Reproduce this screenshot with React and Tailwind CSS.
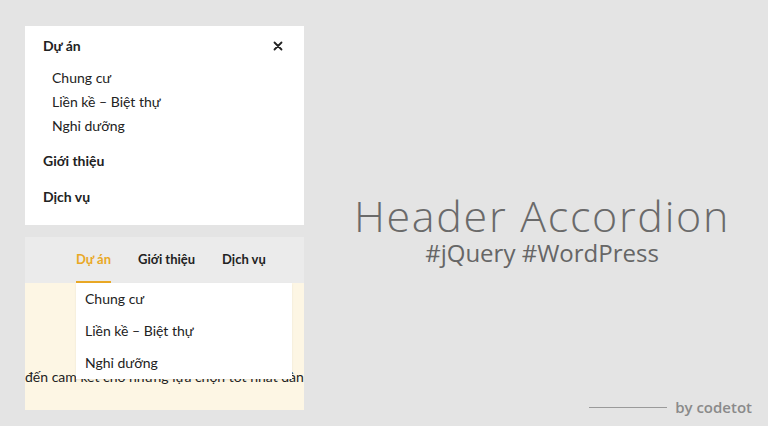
import React from 'react';

const SUB_ITEMS = ['Chung cư', 'Liền kề – Biệt thự', 'Nghỉ dưỡng'];
const NAV_ITEMS = ['Dự án', 'Giới thiệu', 'Dịch vụ'];

const MobileAccordion = () => (
  <div className="bg-white w-[279px] h-[199px] pt-[10px] pl-[18px] pr-[20px] text-[#222]">
    <div className="flex items-center justify-between h-[20px]">
      <span className="text-[14px] font-bold leading-[20px]">Dự án</span>
      <svg width="10" height="10" viewBox="0 0 10 10" className="mr-[1px]">
        <path d="M1.5 1.5 L8.5 8.5 M8.5 1.5 L1.5 8.5" stroke="#222" strokeWidth="1.8" strokeLinecap="round" />
      </svg>
    </div>
    <ul className="mt-[10px] pl-[9px]">
      {SUB_ITEMS.map((item) => (
        <li key={item} className="h-[24px] leading-[24px] text-[14px]">{item}</li>
      ))}
    </ul>
    <div className="mt-[13px] h-[20px] leading-[20px] text-[14px] font-bold">Giới thiệu</div>
    <div className="mt-[16px] h-[20px] leading-[20px] text-[14px] font-bold">Dịch vụ</div>
  </div>
);

const DesktopHeader = () => (
  <div className="mt-[12px] w-[279px] h-[173px] overflow-hidden flex flex-col text-[#222]">
    <nav className="h-[46px] bg-[#ebebeb] flex items-stretch pl-[51px] gap-[27px] shrink-0">
      {NAV_ITEMS.map((item, i) => (
        <div
          key={item}
          className={`flex items-center text-[13px] font-bold border-b-2 pt-[2px] ${
            i === 0 ? 'text-[#e9a825] border-[#e9a825]' : 'border-transparent'
          }`}
        >
          {item}
        </div>
      ))}
    </nav>
    <div className="relative flex-1 bg-[#fdf6e4]">
      {/* page copy peeking out under the open dropdown */}
      <p className="pt-[85px] text-[14px] leading-[18px] whitespace-nowrap">
        đến cam kết cho những lựa chọn tốt nhất dành cho bạn
      </p>
      <ul className="absolute left-[51px] top-0 w-[216px] bg-white shadow-[0_1px_2px_rgba(0,0,0,0.08)]">
        {SUB_ITEMS.map((item) => (
          <li key={item} className="h-[32px] leading-[32px] pl-[9px] text-[14px]">{item}</li>
        ))}
      </ul>
    </div>
  </div>
);

export default function App() {
  return (
    <div
      className="w-[768px] h-[426px] bg-[#e4e4e4] flex overflow-hidden"
      style={{ fontFamily: 'Lato, "Noto Sans", sans-serif' }}
    >
      <div className="pl-[25px] pt-[26px]">
        <MobileAccordion />
        <DesktopHeader />
      </div>
      <div className="flex-1 flex flex-col" style={{ fontFamily: '"Open Sans", sans-serif' }}>
        <div className="flex-1 flex flex-col items-center pl-[12px] pt-[196px] text-[#6a6a6a]">
          <h1 className="text-[43px] font-light leading-[40px] tracking-[1.7px]">Header Accordion</h1>
          <p className="text-[24px] font-medium leading-[28px] mt-[3px] text-[#666]">#jQuery #WordPress</p>
        </div>
        <div className="h-[36px] flex items-center justify-end pr-[16px] gap-[8px] pb-[2px] text-[#8a8a8a]">
          <span className="w-[78px] h-px bg-[#9a9a9a]" />
          <span className="text-[15px] font-semibold">by codetot</span>
        </div>
      </div>
    </div>
  );
}
